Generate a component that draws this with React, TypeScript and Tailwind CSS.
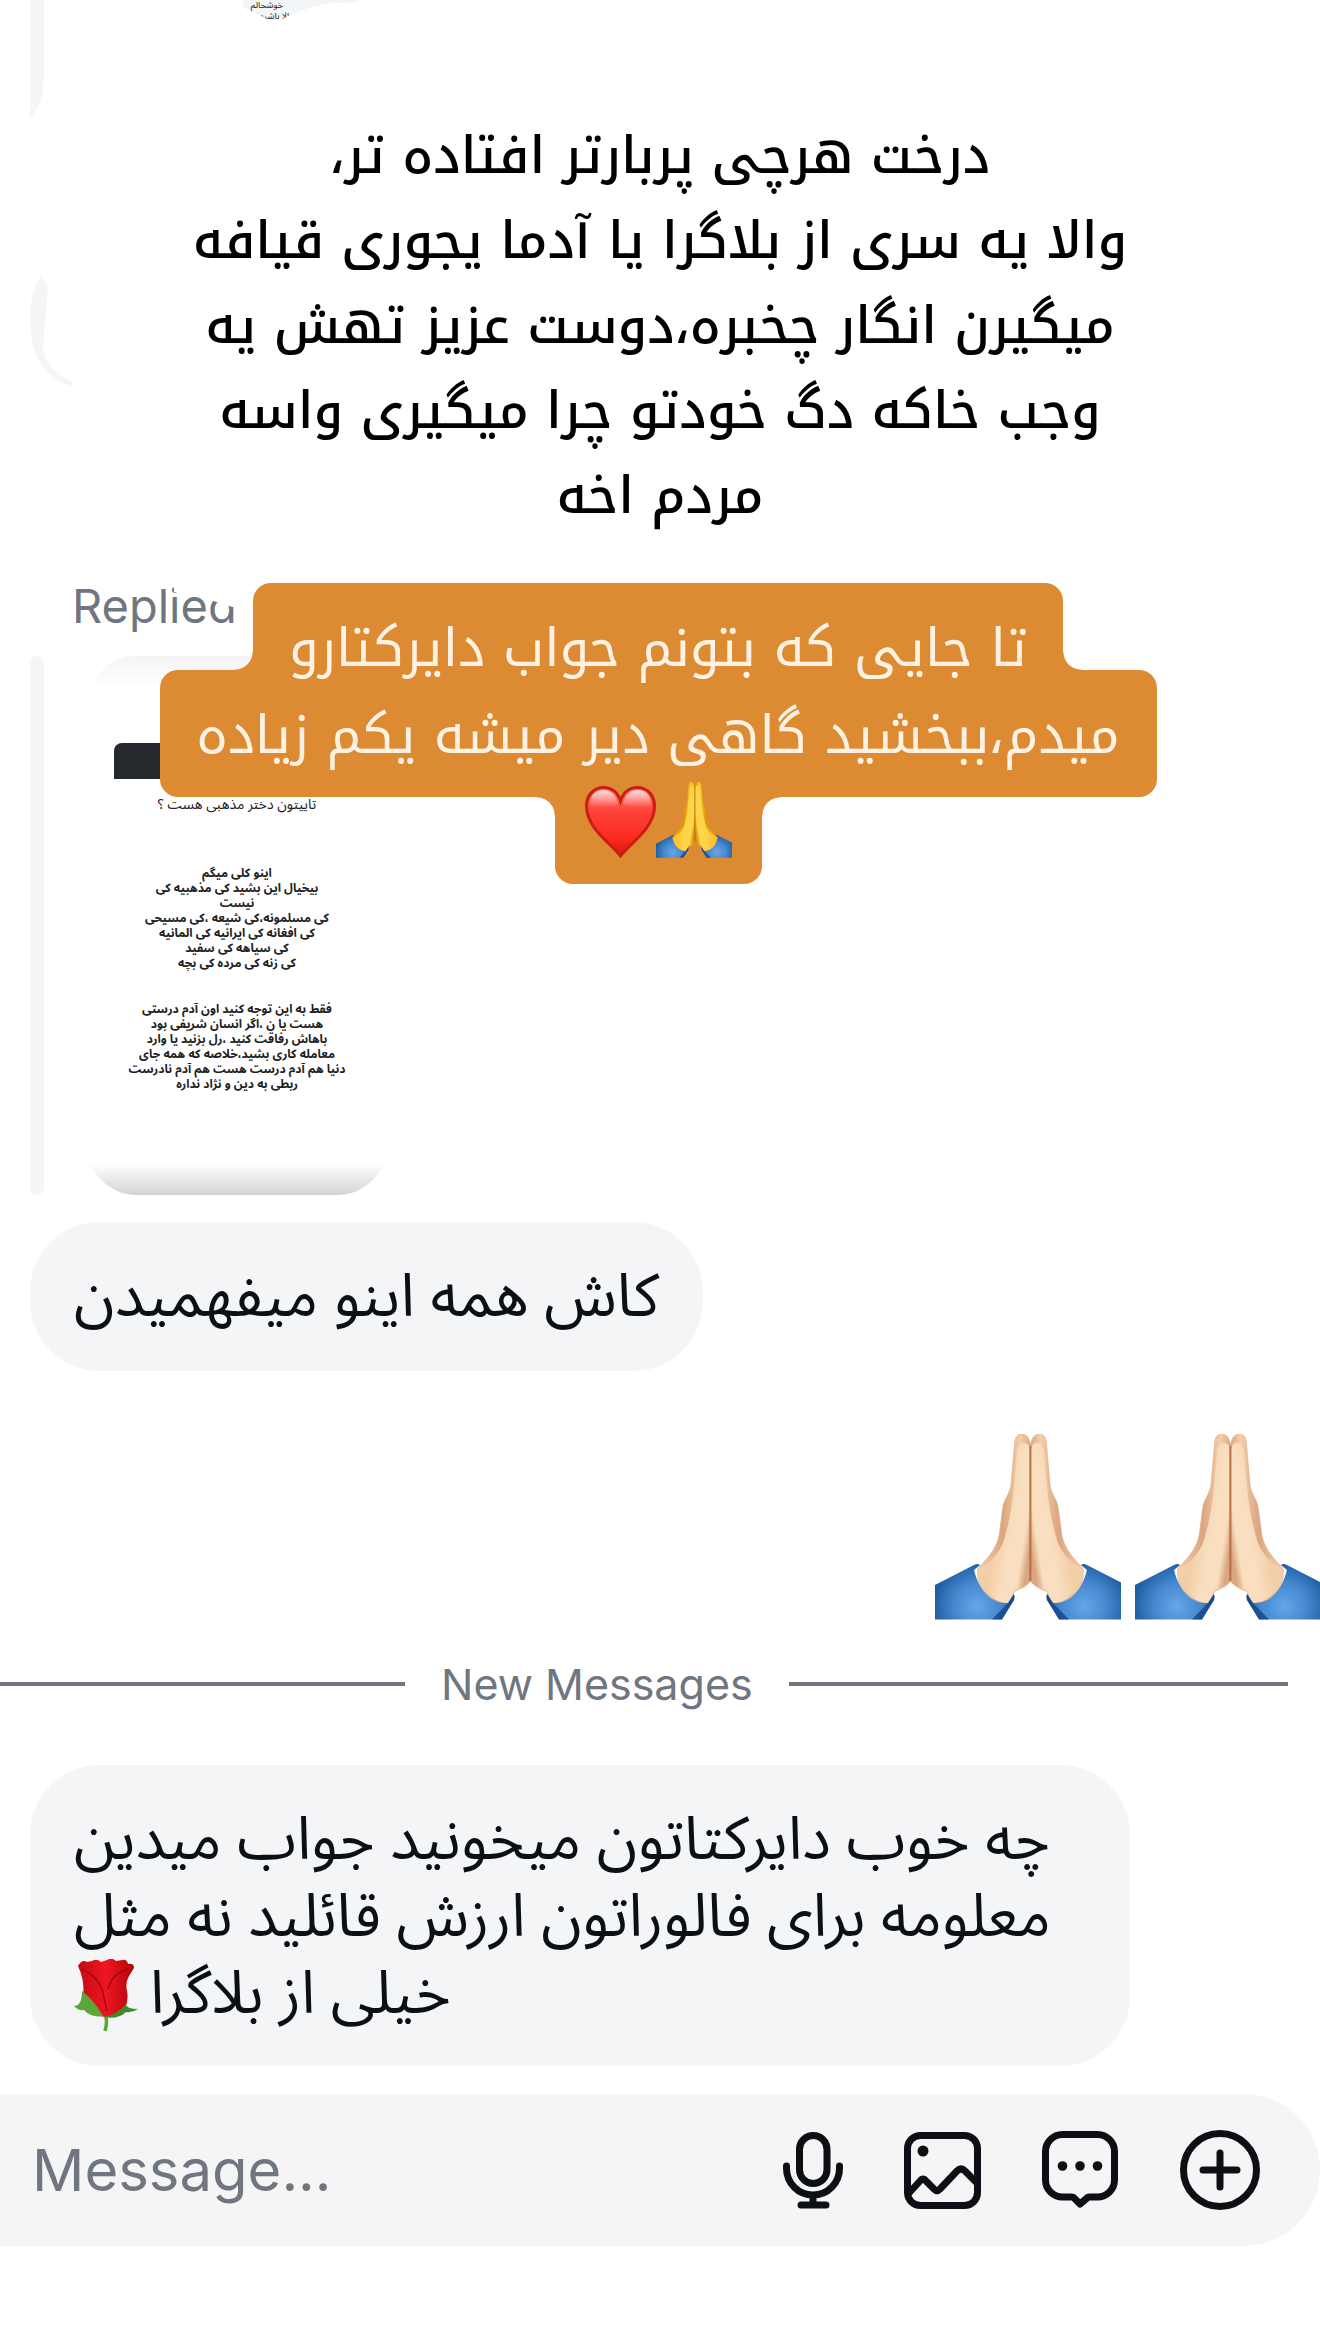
import { useId } from "react";
import type { ReactNode } from "react";

const headline = [
  "درخت هرچی پربارتر افتاده تر،",
  "والا یه سری از بلاگرا یا آدما یجوری قیافه",
  "میگیرن انگار چخبره،دوست عزیز تهش یه",
  "وجب خاکه دگ خودتو چرا میگیری واسه",
  "مردم اخه",
];

const storyFirst = [
  "اینو کلی میگم",
  "بیخیال این بشید کی مذهبیه کی",
  "نیست",
  "کی مسلمونه،کی شیعه ،کی مسیحی",
  "کی افغانه کی ایرانیه کی المانیه",
  "کی سیاهه کی سفید",
  "کی زنه کی مرده کی بچه",
];

const storySecond = [
  "فقط به این توجه کنید اون آدم درستی",
  "هست یا ن ،اگر انسان شریفی بود",
  "باهاش رفاقت کنید ،رل بزنید یا وارد",
  "معامله کاری بشید،خلاصه که همه جای",
  "دنیا هم آدم درست هست هم آدم نادرست",
  "ربطی به دین و نژاد نداره",
];

const reply = [
  "چه خوب دایرکتاتون میخونید جواب میدین",
  "معلومه برای فالوراتون ارزش قائلید نه مثل",
];

type Tone = { front: string; mid: string; shade: string; crease: string };
const lightTone: Tone = { front: "#f9dfc0", mid: "#f3cfa9", shade: "#dba680", crease: "#b8683f" };
const yellowTone: Tone = { front: "#ffd548", mid: "#fcc630", shade: "#dd9410", crease: "#b06a08" };

function Hand({ id, tone }: { id: string; tone: Tone }) {
  return (
    <g>
      <path
        d="M95.5 12C95 4 91 0 87 0C82 0 79.500 4 79.500 10L76 50C75 60 70 63 68 72L64 102C61 116 50 127 43 134C40 150 52 172 73 169C77 168 77 160 80 157C87 155 93 151 95.500 147Z"
        fill={`url(#${id}-back)`}
        stroke={tone.shade}
        strokeOpacity="0.5"
      />
      <path
        d="M95.500 18C95 11 92 9 89 9C85 9 82.500 12 82 18L78 62C76 80 73 92 69 106C64 122 52 130 42 137C45 152 56 169 73 169C76 167 76 160 80 156C87 154 93 150 95.500 146Z"
        fill={`url(#${id}-front)`}
      />
      <path d="M95.500 12V147" stroke={tone.crease} strokeWidth="2" strokeOpacity="0.8" />
      <path
        d="M0 151L39 131Q43 129 45 131L39 136C44 156 56 170 73 169L79 160Q80 163 79 166L67 185.500H0Z"
        fill={`url(#${id}-sleeve)`}
      />
      <path d="M79 160Q80 163 79 166L67 185.500H57L73 169Z" fill="#062f70" fillOpacity="0.6" />
    </g>
  );
}

function PrayingHands({ tone, className }: { tone: Tone; className: string }) {
  const id = useId();
  return (
    <svg viewBox="0 0 186 186" className={className} role="img" aria-label="🙏">
      <defs>
        <linearGradient id={`${id}-back`} x1="44" x2="96" y1="0" y2="0" gradientUnits="userSpaceOnUse">
          <stop offset="0" stopColor={tone.mid} />
          <stop offset="0.45" stopColor={tone.shade} />
          <stop offset="0.8" stopColor={tone.mid} />
          <stop offset="1" stopColor={tone.shade} />
        </linearGradient>
        <linearGradient id={`${id}-front`} x1="46" x2="96" y1="98" y2="106" gradientUnits="userSpaceOnUse">
          <stop offset="0" stopColor={tone.mid} />
          <stop offset="0.3" stopColor={tone.mid} />
          <stop offset="0.6" stopColor={tone.front} />
          <stop offset="0.86" stopColor={tone.front} />
          <stop offset="1" stopColor={tone.shade} />
        </linearGradient>
        <radialGradient id={`${id}-sleeve`} cx="42" cy="172" r="52" gradientUnits="userSpaceOnUse">
          <stop offset="0" stopColor="#66a6e8" />
          <stop offset="0.45" stopColor="#4588cf" />
          <stop offset="1" stopColor="#0f4a8d" />
        </radialGradient>
      </defs>
      <Hand id={id} tone={tone} />
      <g transform="translate(191 0) scale(-1 1)">
        <Hand id={id} tone={tone} />
      </g>
    </svg>
  );
}

function Heart() {
  return (
    <svg viewBox="0 0 71 72" className="h-[72px] w-[71px]" role="img" aria-label="❤️">
      <defs>
        <linearGradient id="heart-fill" x1="0" x2="0" y1="0" y2="1">
          <stop offset="0" stopColor="#ff7a70" />
          <stop offset="0.35" stopColor="#ff4339" />
          <stop offset="0.75" stopColor="#fb2a20" />
          <stop offset="1" stopColor="#d51a10" />
        </linearGradient>
        <linearGradient id="heart-shine" x1="0" x2="0" y1="0" y2="1">
          <stop offset="0" stopColor="#fff" stopOpacity="0.75" />
          <stop offset="1" stopColor="#fff" stopOpacity="0" />
        </linearGradient>
      </defs>
      <path
        d="M35.500 70C27 58 1.500 43 1.500 20C1.500 9 9 1.500 18.500 1.500C27 1.500 33 7 35.500 15C38 7 44 1.500 52.500 1.500C62 1.500 69.500 9 69.500 20C69.500 43 44 58 35.500 70Z"
        fill="url(#heart-fill)"
        stroke="#cc1d12"
        strokeWidth="3"
      />
      <path d="M5 19C5 9 11 4 18 4C26 4 31 9 33 18C25 22 13 23 5 19Z" fill="url(#heart-shine)" />
      <path d="M66 19C66 9 60 4 53 4C45 4 40 9 38 18C46 22 58 23 66 19Z" fill="url(#heart-shine)" />
    </svg>
  );
}

function Rose() {
  return (
    <svg viewBox="0 0 64 72" className="h-[72px] w-16 shrink-0" role="img" aria-label="🌹">
      <defs>
        <linearGradient id="rose-fill" x1="0" x2="1" y1="0" y2="0">
          <stop offset="0" stopColor="#c50a12" />
          <stop offset="0.5" stopColor="#ee1620" />
          <stop offset="1" stopColor="#b4040c" />
        </linearGradient>
      </defs>
      <path d="M31 54Q34 62 31 72" stroke="#5aa833" strokeWidth="3.500" fill="none" />
      <path
        d="M4 7Q8 0 13 3L18 2Q23 -1 27 3L33 1Q38 -2 42 2L48 1Q53 0 54 5Q60 4 60 9L55 17Q51 24 53 32Q56 49 43 56Q32 61 20 55Q9 49 9 36Q11 22 4 7Z"
        fill="url(#rose-fill)"
      />
      <path d="M8 10Q22 16 28 30L33 52M56 9Q38 14 34 30" stroke="#98050c" strokeWidth="1.200" fill="none" />
      <path d="M8 32Q20 41 29 57Q17 59 10 51Q4 52 0 47Q8 47 8 32Z" fill="#5ca63a" />
      <path d="M52 45Q52 50 64 50Q58 54 52 53Q44 61 29 58Q43 56 52 45Z" fill="#3f8a2d" />
    </svg>
  );
}

function IconButton({ label, children }: { label: string; children: ReactNode }) {
  return (
    <button type="button" aria-label={label} className="shrink-0 text-[#0c1014]">
      {children}
    </button>
  );
}

const stroke = {
  fill: "none",
  stroke: "currentColor",
  strokeWidth: 7,
  strokeLinecap: "round",
  strokeLinejoin: "round",
} as const;

function Composer() {
  return (
    <form
      className="mt-7 flex h-[152px] items-center gap-[61px] rounded-r-[76px] bg-[#f5f5f5] pr-[60px] pl-8"
      onSubmit={(e) => e.preventDefault()}
    >
      <input
        type="text"
        aria-label="Message"
        placeholder="Message..."
        className="min-w-0 flex-1 bg-transparent font-[Inter,sans-serif] text-[58px] text-[#0c1014] outline-none placeholder:text-[#6f767f] placeholder:opacity-100"
      />
      <IconButton label="Voice message">
        <svg viewBox="0 0 60 77" className="h-[77px] w-[60px]" {...stroke}>
          <rect x="16.500" y="3.500" width="27.500" height="48" rx="13.750" />
          <path d="M3.500 34v2.500a26.500 26.500 0 0 0 53 0V34M30 63v10M18 73h25" />
        </svg>
      </IconButton>
      <IconButton label="Photo">
        <svg viewBox="0 0 77 77" className="size-[77px]" {...stroke}>
          <rect x="3.500" y="3.500" width="70" height="70" rx="13" />
          <path d="M5 61L16 49Q19 45 22 49L30 57Q33 60 36 57L53 39Q57 35 61 39L72 50" />
          <circle cx="19" cy="19" r="5.500" fill="currentColor" stroke="none" />
        </svg>
      </IconButton>
      <IconButton label="Saved reply">
        <svg viewBox="0 0 77 78" className="h-[78px] w-[77px]" {...stroke}>
          <path d="M20.500 3.500h35a17 17 0 0 1 17 17v28.500a17 17 0 0 1-17 17h-8q-2 0-3 1.500L38 73l-5.500-5.500q-1-1.500-3-1.500h-9a17 17 0 0 1-17-17V20.500a17 17 0 0 1 17-17Z" />
          <g fill="currentColor" stroke="none">
            <circle cx="20.500" cy="35" r="4.800" />
            <circle cx="38" cy="35" r="4.800" />
            <circle cx="55.500" cy="35" r="4.800" />
          </g>
        </svg>
      </IconButton>
      <IconButton label="More">
        <svg viewBox="0 0 80 80" className="size-20" {...stroke}>
          <circle cx="40" cy="40" r="36.500" />
          <path d="M40 23v34M23 40h34" />
        </svg>
      </IconButton>
    </form>
  );
}

function Caption() {
  return (
    <div
      dir="rtl"
      className="absolute inset-x-0 top-0 pr-1 text-center font-['Noto_Kufi_Arabic','DejaVu_Sans',sans-serif] text-[53px] leading-[86px] whitespace-nowrap text-[#fff2e4]"
    >
      <p className="relative z-10 mx-auto h-[87px] w-[810px] max-w-full rounded-t-[18px] bg-[#dc8b32] pt-[23px]">
        تا جایی که بتونم جواب دایرکتارو
        <span className="absolute bottom-0 left-[-18px] size-[18px] bg-[radial-gradient(circle_at_0_0,transparent_17px,#dc8b32_18px)]" />
        <span className="absolute right-[-18px] bottom-0 size-[18px] bg-[radial-gradient(circle_at_100%_0,transparent_17px,#dc8b32_18px)]" />
      </p>
      <p className="mx-auto h-[127px] w-[997px] max-w-full rounded-[18px] bg-[#dc8b32] pt-[23px]">
        میدم،ببخشید گاهی دیر میشه یکم زیاده
      </p>
      <div className="relative z-10 mx-auto flex h-[87px] w-[207px] items-end justify-center rounded-b-[18px] bg-[#dc8b32] pb-[26px]">
        <PrayingHands tone={yellowTone} className="size-[76px]" />
        <Heart />
        <span className="absolute top-0 left-[-18px] size-[18px] bg-[radial-gradient(circle_at_0_100%,transparent_17px,#dc8b32_18px)]" />
        <span className="absolute top-0 right-[-18px] size-[18px] bg-[radial-gradient(circle_at_100%_100%,transparent_17px,#dc8b32_18px)]" />
      </div>
    </div>
  );
}

function RepliedStory() {
  return (
    <section className="relative mt-11 pl-[30px]">
      <p className="relative ml-[42px] w-fit font-[Inter,sans-serif] text-[47px] leading-[45px] text-[#6f767f]">
        Replied
        <svg viewBox="0 0 80 28" className="absolute top-0 right-0 h-7 w-20" aria-hidden="true">
          <path d="M17 0V9Q40 9 50 15Q62 21 80 25V0Z" fill="#fff" />
        </svg>
      </p>
      <div className="mt-7 flex gap-[43px]">
        <div className="w-[14px] rounded-[7px] bg-[#f3f5f7]" />
        <div
          dir="rtl"
          className="flex h-[539px] w-[300px] flex-col items-center overflow-hidden rounded-[50px] bg-[linear-gradient(to_bottom,#f4f4f4,#fff_30px,#fff_508px,#d3d3d3)] pt-[87px] font-['Noto_Sans_Arabic','DejaVu_Sans',sans-serif] leading-[15px] whitespace-nowrap text-[#222]"
        >
          <div className="h-9 w-[246px] shrink-0 rounded-t-lg bg-[#25282d]" />
          <p className="mt-[18px] text-[14px]">تاییتون دختر مذهبی هست ؟</p>
          <div className="mt-[54px] text-center text-[12px] font-bold">
            {storyFirst.map((line) => (
              <p key={line}>{line}</p>
            ))}
          </div>
          <div className="mt-[31px] text-center text-[12px] font-bold">
            {storySecond.map((line) => (
              <p key={line}>{line}</p>
            ))}
          </div>
        </div>
      </div>
      <Caption />
    </section>
  );
}

function Fragments() {
  return (
    <>
      <svg viewBox="0 0 80 400" className="absolute top-0 left-0 h-[400px] w-20" fill="#f3f5f7" aria-hidden="true">
        <path d="M30 0H44V78Q42 100 38 107L30 119Z" />
        <path d="M41 275L48 286L43 349Q48 372 73 382V387Q48 380 37 357Q30 340 30 318Q30 292 41 275Z" />
      </svg>
      <div
        dir="rtl"
        className="absolute top-0 left-[243px] h-[21px] w-[114px] bg-[#f3f5f7] pr-[62px] font-['Noto_Sans_Arabic','DejaVu_Sans',sans-serif] text-[9px] leading-[11px] whitespace-nowrap text-[#222] [clip-path:polygon(0_0,100%_0,100%_12%,76%_16%,60%_34%,44%_64%,34%_92%,25%_100%,16%_76%,0_36%)]"
      >
        <p className="pr-3">خوشحالم</p>
        <p>حالا باشید</p>
      </div>
    </>
  );
}

const bubble =
  "ml-[30px] w-fit max-w-full rounded-[70px] bg-[#f3f5f7] px-11 pt-[37px] font-['Noto_Sans_Arabic','DejaVu_Sans',sans-serif] text-[60px] leading-[77px] text-[#0c1014]";

export default function App() {
  return (
    <main className="relative flex min-h-screen flex-col overflow-hidden bg-white">
      <Fragments />
      <h1
        dir="rtl"
        className="pt-[114px] text-center font-['Noto_Kufi_Arabic','DejaVu_Sans',sans-serif] text-[51px] leading-[85px] font-medium whitespace-nowrap text-black"
      >
        {headline.map((line) => (
          <span key={line} className="block">
            {line}
          </span>
        ))}
      </h1>

      <RepliedStory />

      <p dir="rtl" className={`${bubble} mt-[27px] pb-[35px]`}>
        کاش همه اینو میفهمیدن
      </p>

      <div className="mt-[63px] -mr-px flex justify-end gap-[14px]">
        <PrayingHands tone={lightTone} className="size-[186px]" />
        <PrayingHands tone={lightTone} className="size-[186px]" />
      </div>

      <div className="mt-[34px] mr-8 flex items-center gap-9 font-[Inter,sans-serif] text-[43px] leading-[60px] text-[#6f767f]">
        <div className="h-1 flex-[404] bg-[#6f767f]" />
        <h2 className="shrink-0">New Messages</h2>
        <div className="h-1 flex-[498] bg-[#6f767f]" />
      </div>

      <div dir="rtl" className={`${bubble} mt-[51px] min-w-[1100px] pb-[33px]`}>
        {reply.map((line) => (
          <p key={line} className="text-left">
            {line}
          </p>
        ))}
        <p className="flex items-center justify-end gap-3">
          <span>خیلی از بلاگرا</span>
          <Rose />
        </p>
      </div>

      <Composer />
    </main>
  );
}
